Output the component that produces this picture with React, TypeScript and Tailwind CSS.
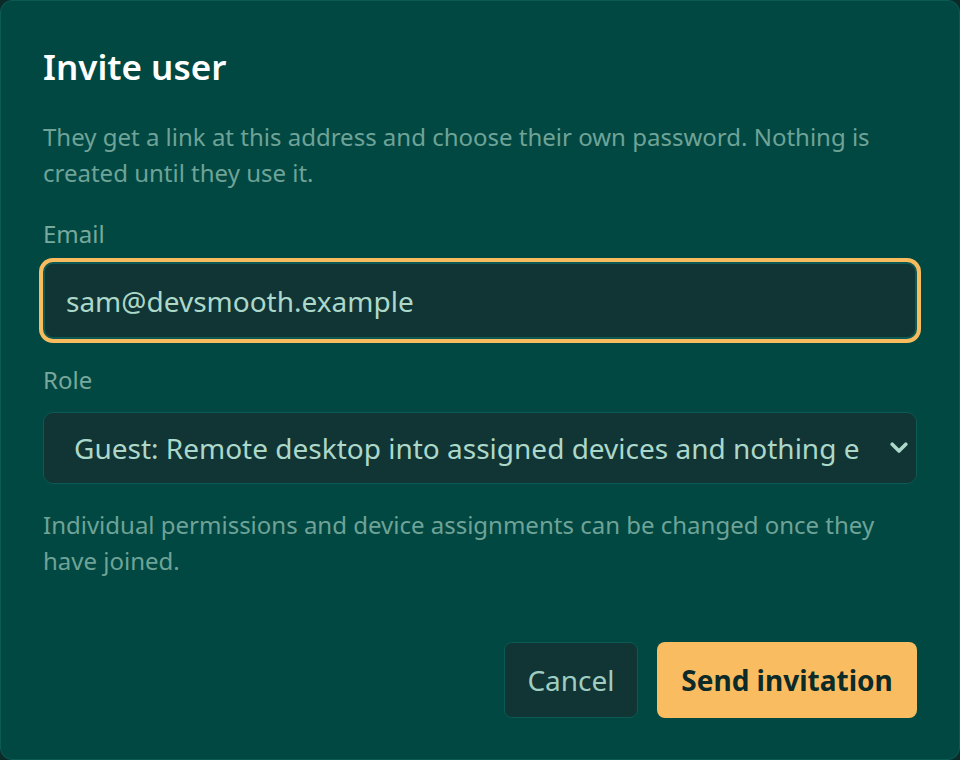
import React from "react";

export default function App() {
  return (
    <div className="w-[960px] h-[760px] bg-[#0b2a28]" style={{ fontFamily: '"Noto Sans", sans-serif' }}>
      <div className="h-full rounded-[12px] border border-[#0c5a53] bg-[#014842] px-[42px] pt-[45px] flex flex-col">
        <h2 className="text-[35px] leading-[42px] font-semibold text-white">Invite user</h2>
        <p className="mt-[31px] text-[24px] leading-[36px] text-[#6fa397]">
          They get a link at this address and choose their own password. Nothing is created until they use it.
        </p>
        <label className="mt-[27px] block text-[24px] leading-[32px] text-[#79a89d]">Email</label>
        <div className="mt-[12px] h-[77px] rounded-[10px] border-2 border-[#0c5a53] bg-[#113434] ring-4 ring-[#f8bb5e] flex items-center px-[21px] text-[28px] text-[#acd8ca]">
          sam@devsmooth.example
        </div>
        <label className="mt-[25px] block text-[24px] leading-[32px] text-[#79a89d]">Role</label>
        <div className="mt-[16px] h-[72px] rounded-[10px] border border-[#0c5a53] bg-[#113434] flex items-center pl-[30px] pr-[8px] text-[28px] text-[#acd8ca]">
          <span className="flex-1 whitespace-nowrap overflow-hidden mr-[31px]">
            Guest: Remote desktop into assigned devices and nothing else
          </span>
          <svg width="18" height="12" viewBox="0 0 18 12" fill="none" className="shrink-0">
            <path d="M2.2 2.2 L9 9 L15.8 2.2" stroke="#acd8ca" strokeWidth="3.6" strokeLinecap="round" strokeLinejoin="round" />
          </svg>
        </div>
        <p className="mt-[23px] text-[24px] leading-[36px] text-[#6fa397]">
          Individual permissions and device assignments can be changed once they have joined.
        </p>
        <div className="mt-auto mb-[41px] flex justify-end gap-[19px]">
          <button className="h-[76px] w-[134px] rounded-[8px] border border-[#0c5a53] bg-[#113434] text-[28px] text-[#9fcdc0]">
            Cancel
          </button>
          <button className="h-[76px] w-[260px] rounded-[8px] bg-[#f9bc60] text-[28px] font-bold text-[#0b2a28]">
            Send invitation
          </button>
        </div>
      </div>
    </div>
  );
}
